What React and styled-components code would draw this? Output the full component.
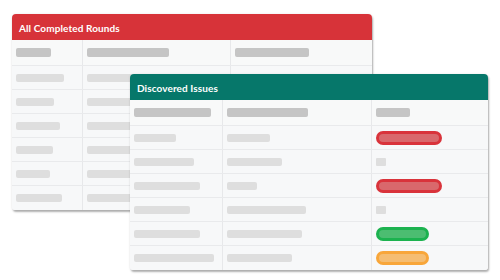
import React from "react";
import styled, { createGlobalStyle } from "styled-components";

const Global = createGlobalStyle`
  html, body { margin: 0; padding: 0; background: #ffffff; }
  body { font-family: Lato, "Open Sans", sans-serif; }
`;

const Stage = styled.div`
  width: 500px;
  height: 280px;
  box-sizing: border-box;
  padding: 14px 0 0 12px;
  display: grid;
  grid-template-columns: 118px 242px 116px;
  grid-template-rows: 60px 136px 60px;
`;

const Card = styled.div`
  grid-area: ${(p) => p.$area};
  display: flex;
  flex-direction: column;
  background: #f7f8f9;
  border-radius: 4px 4px 3px 3px;
  box-shadow: 1px 2px 2px rgba(0, 0, 0, 0.3), 0 0 3px rgba(0, 0, 0, 0.08);
  overflow: hidden;
`;

const Header = styled.div`
  height: 26px;
  flex: none;
  display: flex;
  align-items: center;
  padding-left: 7px;
  padding-top: 1px;
  box-sizing: border-box;
  background: ${(p) => p.$color};
  color: #ffffff;
  font-size: 10px;
  font-weight: 700;
  letter-spacing: 0.1px;
`;

const Row = styled.div`
  display: grid;
  grid-template-columns: ${(p) => p.$cols};
  height: ${(p) => (p.$head ? 26 : 24)}px;
  flex: none;
  box-sizing: border-box;
  border-bottom: 1px solid #e9eaec;
  background: ${(p) => (p.$head ? "#f8f9f9" : "#f7f8f9")};
  &:last-child { border-bottom: none; }
`;

const Cell = styled.div`
  display: flex;
  align-items: center;
  padding-left: 4px;
  box-sizing: border-box;
  & + & { border-left: 1px solid ${(p) => (p.$head ? "#dfe0e2" : "#e7e8ea")}; }
`;

const Bar = styled.div`
  height: ${(p) => (p.$head ? 9 : 8)}px;
  width: ${(p) => p.$w}px;
  border-radius: 2px;
  background: ${(p) => (p.$head ? "#c5c5c5" : "#dedede")};
`;

const Badge = styled.div`
  width: ${(p) => p.$w}px;
  height: 14px;
  box-sizing: border-box;
  border-radius: 7px;
  border: 3px solid ${(p) => p.$edge};
  background: ${(p) => p.$fill};
`;

const Dot = styled.div`
  width: 10px;
  height: 8px;
  border-radius: 1px;
  background: #dedede;
`;

const badges = {
  red: { edge: "#d9333b", fill: "#d9686c", w: 66 },
  green: { edge: "#1cb24f", fill: "#4cbd71", w: 53 },
  orange: { edge: "#f8a63a", fill: "#f5bd72", w: 53 },
};

const rounds = {
  cols: "70px 148px 142px",
  head: [35, 82, 74],
  rows: [
    [48, 90, 80],
    [38, 80, 70],
    [44, 86, 76],
    [37, 78, 70],
    [34, 84, 74],
    [46, 88, 78],
  ],
};

const issues = {
  cols: "92px 149px 117px",
  head: [77, 81, 34],
  rows: [
    [42, 43, "red"],
    [60, 55, null],
    [66, 30, "red"],
    [56, 79, null],
    [66, 75, "green"],
    [80, 65, "orange"],
  ],
};

function Table({ title, color, area, data }) {
  return (
    <Card $area={area}>
      <Header $color={color}>{title}</Header>
      <Row $head $cols={data.cols}>
        {data.head.map((w, i) => (
          <Cell $head key={i}>
            <Bar $head $w={w} />
          </Cell>
        ))}
      </Row>
      {data.rows.map((r, ri) => (
        <Row key={ri} $cols={data.cols}>
          {r.map((v, ci) => {
            if (typeof v === "number") {
              return (
                <Cell key={ci}>
                  <Bar $w={v} />
                </Cell>
              );
            }
            if (v === null) {
              return (
                <Cell key={ci}>
                  <Dot />
                </Cell>
              );
            }
            const b = badges[v];
            return (
              <Cell key={ci}>
                <Badge $w={b.w} $edge={b.edge} $fill={b.fill} />
              </Cell>
            );
          })}
        </Row>
      ))}
    </Card>
  );
}

export default function App() {
  return (
    <>
      <Global />
      <Stage>
        <Table title="All Completed Rounds" color="#d73339" area="1 / 1 / 3 / 3" data={rounds} />
        <Table title="Discovered Issues" color="#06776a" area="2 / 2 / 4 / 4" data={issues} />
      </Stage>
    </>
  );
}
